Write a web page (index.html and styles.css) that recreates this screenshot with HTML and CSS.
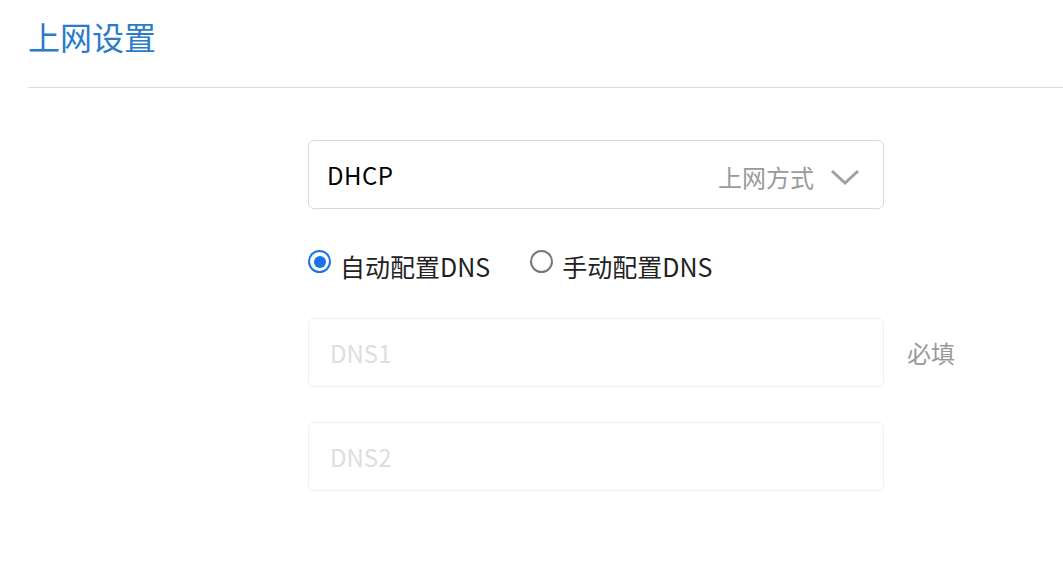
FILE: index.html
```html
<!DOCTYPE html>
<html lang="zh">
<head>
<meta charset="utf-8">
<link rel="stylesheet" href="styles.css">
</head>
<body>
<div class="page">
  <header class="header">
    <h1 class="title">上网设置</h1>
  </header>
  <main class="form">
    <div class="select">
      <span class="select-value">DHCP</span>
      <span class="select-label">上网方式</span>
      <svg class="chevron" width="30" height="18" viewBox="0 0 30 18"><path d="M2 3 L15 15 L28 3" fill="none" stroke="#a0a0a0" stroke-width="3"/></svg>
    </div>
    <div class="radios">
      <label class="radio-item"><span class="radio checked"></span><span class="radio-text">自动配置DNS</span></label>
      <label class="radio-item"><span class="radio"></span><span class="radio-text">手动配置DNS</span></label>
    </div>
    <div class="field-row">
      <div class="input"><span class="placeholder">DNS1</span></div>
      <span class="hint">必填</span>
    </div>
    <div class="field-row second">
      <div class="input"><span class="placeholder">DNS2</span></div>
    </div>
  </main>
</div>
</body>
</html>
```
FILE: styles.css
```css
html, body {
  margin: 0;
  padding: 0;
  background: #fff;
  font-family: "Noto Sans CJK SC", "Noto Sans", sans-serif;
}
.page {
  width: 1063px;
  height: 574px;
  overflow: hidden;
}
.header {
  margin-left: 28px;
  height: 88px;
  border-bottom: 1px solid #dcdcdc;
  box-sizing: border-box;
}
.title {
  margin: 0;
  padding-top: 16px;
  font-size: 32px;
  line-height: 40px;
  font-weight: normal;
  color: #2b7bcb;
}
.form {
  margin-left: 308px;
  padding-top: 52px;
  display: flex;
  flex-direction: column;
}
.select {
  width: 576px;
  height: 69px;
  box-sizing: border-box;
  border: 1px solid #d8d8d8;
  border-radius: 6px;
  display: flex;
  align-items: center;
  padding: 0 23px 0 18px;
}
.select-value {
  font-size: 24px;
  color: #000;
  flex: 1;
  line-height: 30px;
  letter-spacing: 0.5px;
}
.select-label {
  font-size: 24px;
  color: #9a9a9a;
  line-height: 30px;
  margin-top: 4px;
}
.chevron {
  margin-left: 16px;
  margin-top: 4px;
}
.radios {
  display: flex;
  align-items: center;
  margin-top: 37px;
  height: 40px;
}
.radio-item {
  display: flex;
  align-items: center;
  margin-right: 40px;
}
.radio {
  width: 23px;
  height: 23px;
  box-sizing: border-box;
  border-radius: 50%;
  border: 2px solid #777;
  margin-right: 9px;
  margin-top: -9px;
  position: relative;
}
.radio.checked {
  border-color: #1a73e8;
}
.radio.checked::after {
  content: "";
  position: absolute;
  left: 3.5px;
  top: 3.5px;
  width: 12px;
  height: 12px;
  border-radius: 50%;
  background: #1a73e8;
}
.radio-text {
  font-size: 25px;
  line-height: 30px;
  color: #222;
}
.field-row {
  display: flex;
  align-items: center;
  margin-top: 32px;
}
.field-row.second {
  margin-top: 35px;
}
.input {
  width: 576px;
  height: 69px;
  box-sizing: border-box;
  border: 1px solid #f0f0f0;
  border-radius: 6px;
  display: flex;
  align-items: center;
  padding-left: 21px;
}
.placeholder {
  font-size: 24px;
  color: #dedede;
  line-height: 30px;
}
.hint {
  margin-left: 23px;
  font-size: 24px;
  color: #999;
  line-height: 30px;
}
```
